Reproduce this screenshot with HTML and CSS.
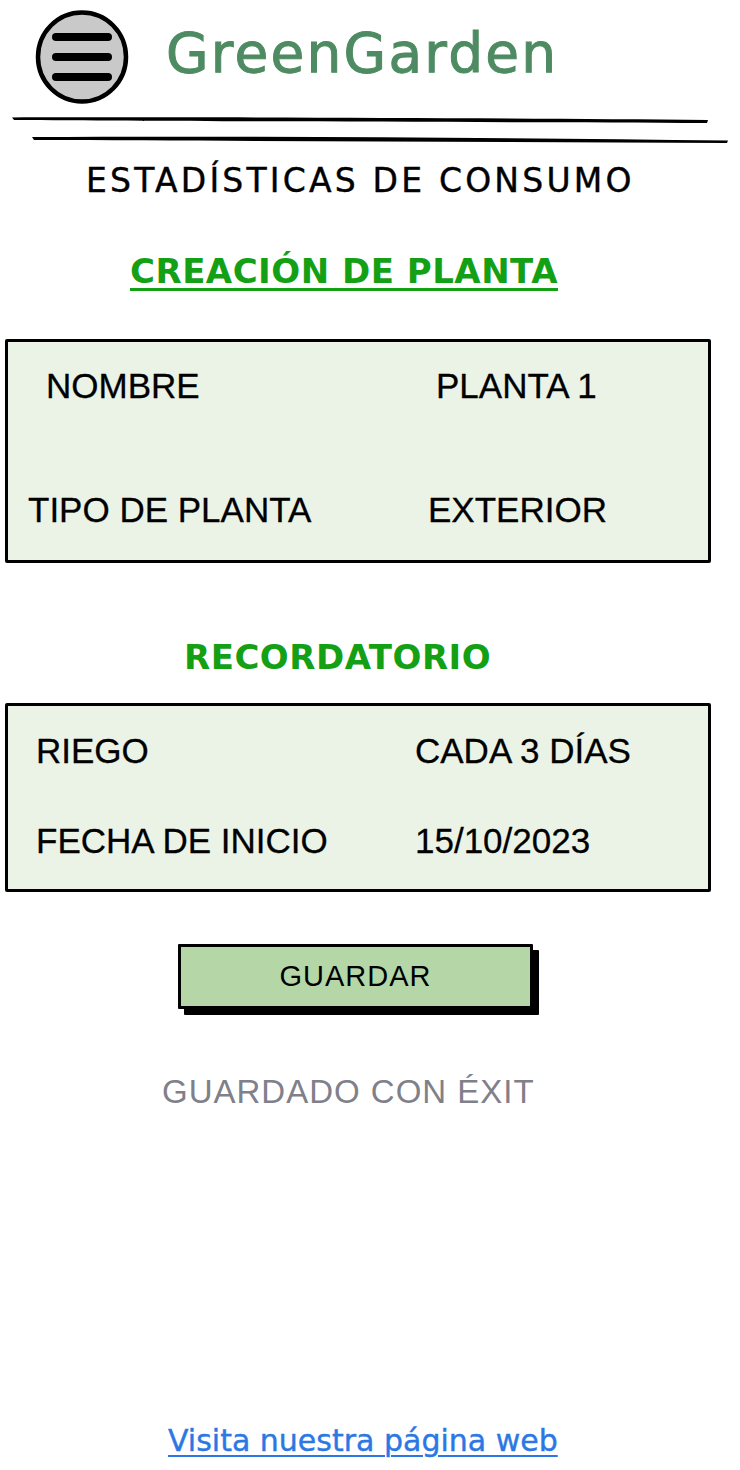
FILE: index.html
```html
<!DOCTYPE html>
<html lang="es">
<head>
<meta charset="utf-8">
<title>GreenGarden</title>
<link rel="stylesheet" href="styles.css">
</head>
<body>
<div class="page">
  <header class="header">
    <svg class="menu-btn" viewBox="0 0 96 96" width="96" height="96">
      <ellipse cx="48" cy="48" rx="44" ry="44.5" fill="#c9c9c9" stroke="#000" stroke-width="4.5"/>
      <line x1="22" y1="28" x2="74" y2="28" stroke="#000" stroke-width="8" stroke-linecap="round"/>
      <line x1="22" y1="48" x2="74" y2="48" stroke="#000" stroke-width="8" stroke-linecap="round"/>
      <line x1="22" y1="68" x2="74" y2="68" stroke="#000" stroke-width="8" stroke-linecap="round"/>
    </svg>
    <h1 class="brand">GreenGarden</h1>
  </header>
  <svg class="rules" viewBox="0 0 740 35" width="740" height="35">
    <path d="M12,5.5 C200,5 500,6 708,8 L707,11 C500,10 200,9.5 14,8 Z" fill="#000"/>
    <path d="M32,25 C250,24 500,25.5 728,28.5 L727,31 C500,30 250,29 34,28 Z" fill="#000"/>
  </svg>
  <h2 class="page-title">ESTADÍSTICAS DE CONSUMO</h2>
  <h3 class="section-title section-creacion">CREACIÓN DE PLANTA</h3>
  <div class="card card-planta">
    <div class="kv kv-nombre"><span class="kv-label">NOMBRE</span><span class="kv-value">PLANTA 1</span></div>
    <div class="kv kv-tipo"><span class="kv-label">TIPO DE PLANTA</span><span class="kv-value">EXTERIOR</span></div>
  </div>
  <h3 class="section-title section-recordatorio">RECORDATORIO</h3>
  <div class="card card-recordatorio">
    <div class="kv kv-riego"><span class="kv-label">RIEGO</span><span class="kv-value">CADA 3 DÍAS</span></div>
    <div class="kv kv-fecha"><span class="kv-label">FECHA DE INICIO</span><span class="kv-value">15/10/2023</span></div>
  </div>
  <div class="actions">
    <button class="save-btn" type="button">GUARDAR</button>
  </div>
  <p class="status">GUARDADO CON ÉXIT</p>
  <p class="footer"><a class="web-link" href="#">Visita nuestra página web</a></p>
</div>
</body>
</html>
```
FILE: styles.css
```css
* { box-sizing: border-box; }
html, body { margin: 0; padding: 0; background: #fff; }
.page { width: 740px; height: 1470px; overflow: hidden; font-family: "Liberation Sans", Arial, sans-serif; color: #000; }

.header { display: flex; align-items: flex-start; height: 112px; }
.menu-btn { display: block; margin: 9px 0 0 34px; flex: none; }
.brand {
  margin: 26px 0 0 36px;
  font-family: "DejaVu Sans", sans-serif;
  font-weight: normal;
  font-size: 55px;
  line-height: 1;
  letter-spacing: 2.2px;
  color: #4e8b62;
  -webkit-text-stroke: 1px #4e8b62;
}

.rules { display: block; }

.page-title {
  margin: 17px 0 0 0;
  padding-left: 86px;
  font-family: "DejaVu Sans", sans-serif;
  font-weight: normal;
  font-size: 33px;
  line-height: 1;
  letter-spacing: 3.2px;
  -webkit-text-stroke: 0.4px #000;
}

.section-title {
  margin: 0;
  font-family: "DejaVu Sans", sans-serif;
  font-weight: bold;
  font-size: 34px;
  line-height: 1;
  letter-spacing: 0.5px;
  color: #14a014;
}
.section-creacion {
  margin-top: 57px;
  padding-left: 130px;
  text-decoration: underline;
  text-decoration-thickness: 3px;
  text-underline-offset: 5px;
  text-decoration-color: #14a014;
}
.section-recordatorio {
  margin-top: 77px;
  padding-left: 184px;
}

.card {
  width: 706px;
  margin-left: 5px;
  background: #ebf3e7;
  border: 3px solid #000;
  border-radius: 2px;
  font-size: 35px;
  line-height: 1;
  -webkit-text-stroke: 0.3px #000;
}
.card-planta { margin-top: 51px; height: 224px; padding-top: 26px; }
.card-recordatorio { margin-top: 29px; height: 189px; padding-top: 27px; }

.kv { display: grid; }
.kv-nombre { grid-template-columns: 390px auto; padding-left: 38px; }
.kv-tipo { grid-template-columns: 400px auto; padding-left: 20px; margin-top: 89px; }
.kv-riego { grid-template-columns: 379px auto; padding-left: 28px; }
.kv-fecha { grid-template-columns: 379px auto; padding-left: 28px; margin-top: 55px; }

.actions { margin-top: 52px; padding-left: 178px; }
.save-btn {
  display: block;
  width: 355px;
  height: 65px;
  margin: 0;
  padding: 0;
  background: #b5d7a8;
  border: 3px solid #000;
  border-radius: 1px;
  box-shadow: 6px 6px 0 #000;
  font-family: "Liberation Sans", Arial, sans-serif;
  font-size: 29px;
  letter-spacing: 1px;
  color: #000;
}

.status {
  margin: 66px 0 0 0;
  padding-left: 162px;
  font-size: 33px;
  line-height: 1;
  letter-spacing: 1px;
  color: #80808a;
}

.footer {
  margin: 318px 0 0 0;
  padding-left: 168px;
  font-family: "DejaVu Sans", sans-serif;
  font-size: 30px;
  line-height: 1;
}
.web-link {
  color: #2b78e4;
  text-decoration: underline;
  text-decoration-thickness: 2px;
  text-underline-offset: 4px;
  -webkit-text-stroke: 0.4px #2b78e4;
}
```
